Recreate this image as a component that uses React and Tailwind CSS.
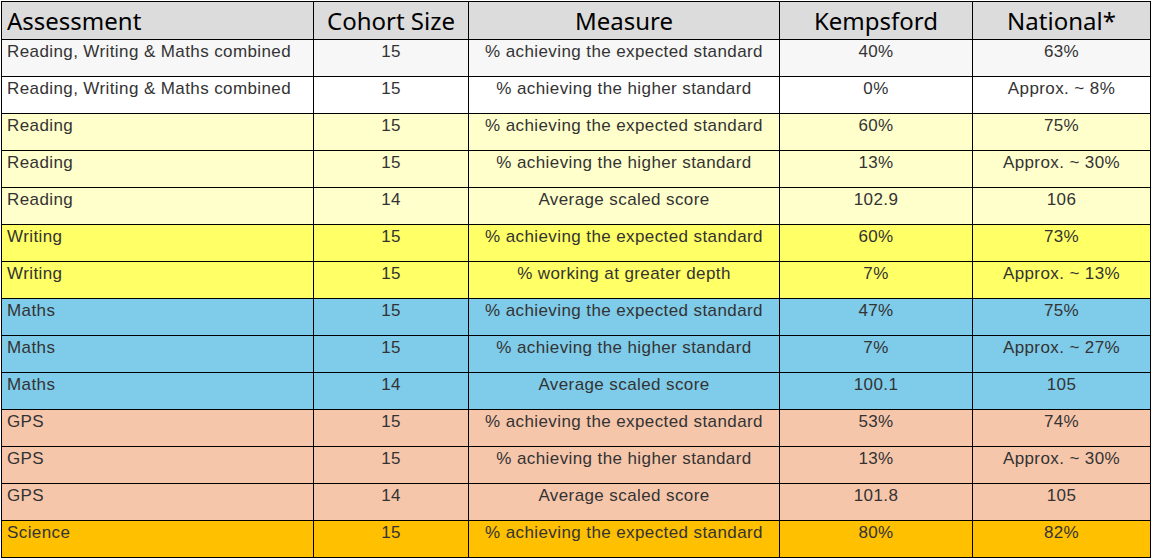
import React from "react";

const rows = [
  ["Reading, Writing & Maths combined", "15", "% achieving the expected standard", "40%", "63%", "bg-[#f7f7f7]"],
  ["Reading, Writing & Maths combined", "15", "% achieving the higher standard", "0%", "Approx. ~ 8%", "bg-white"],
  ["Reading", "15", "% achieving the expected standard", "60%", "75%", "bg-[#ffffcc]"],
  ["Reading", "15", "% achieving the higher standard", "13%", "Approx. ~ 30%", "bg-[#ffffcc]"],
  ["Reading", "14", "Average scaled score", "102.9", "106", "bg-[#ffffcc]"],
  ["Writing", "15", "% achieving the expected standard", "60%", "73%", "bg-[#ffff66]"],
  ["Writing", "15", "% working at greater depth", "7%", "Approx. ~ 13%", "bg-[#ffff66]"],
  ["Maths", "15", "% achieving the expected standard", "47%", "75%", "bg-[#7fcbea]"],
  ["Maths", "15", "% achieving the higher standard", "7%", "Approx. ~ 27%", "bg-[#7fcbea]"],
  ["Maths", "14", "Average scaled score", "100.1", "105", "bg-[#7fcbea]"],
  ["GPS", "15", "% achieving the expected standard", "53%", "74%", "bg-[#f6c6ab]"],
  ["GPS", "15", "% achieving the higher standard", "13%", "Approx. ~ 30%", "bg-[#f6c6ab]"],
  ["GPS", "14", "Average scaled score", "101.8", "105", "bg-[#f6c6ab]"],
  ["Science", "15", "% achieving the expected standard", "80%", "82%", "bg-[#ffc000]"],
];

const headers = ["Assessment", "Cohort Size", "Measure", "Kempsford", "National*"];

export default function App() {
  return (
    <div className="min-h-screen bg-white p-px">
      <div className="grid w-[1150px] grid-cols-[312px_155px_311px_193px_178px] border-l border-t border-black">
        {headers.map((h, i) => (
          <div
            key={h}
            className={`flex h-[38px] items-center border-b border-r border-black bg-[#dcdcdc] font-['Noto_Sans',sans-serif] text-[24px] text-black ${
              i === 0 ? "justify-start pl-[5px]" : "justify-center"
            }`}
          >
            {h}
          </div>
        ))}
        {rows.map((r, ri) =>
          r.slice(0, 5).map((cell, ci) => (
            <div
              key={ri + "-" + ci}
              className={`h-[37px] border-b border-r border-black pt-[2px] font-['Liberation_Sans',Arial,sans-serif] text-[17px] leading-[19px] tracking-[0.4px] text-[#333] ${r[5]} ${
                ci === 0 ? "pl-[5px] text-left" : "text-center"
              }`}
            >
              {cell}
            </div>
          ))
        )}
      </div>
    </div>
  );
}
